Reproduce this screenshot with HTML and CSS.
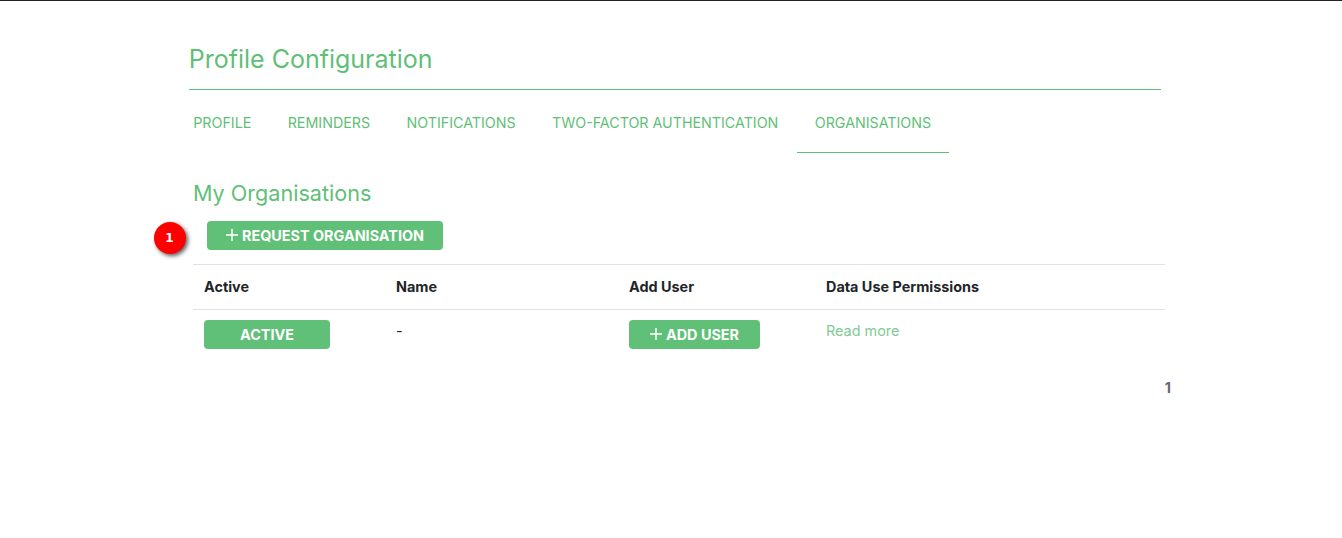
FILE: index.html
```html
<!DOCTYPE html>
<html lang="en">
<head>
<meta charset="utf-8">
<title>Profile Configuration</title>
<link rel="stylesheet" href="styles.css">
</head>
<body>
<main class="page">
  <h1 class="title">Profile Configuration</h1>
  <nav class="tabs">
    <a class="tab">PROFILE</a>
    <a class="tab">REMINDERS</a>
    <a class="tab">NOTIFICATIONS</a>
    <a class="tab">TWO-FACTOR AUTHENTICATION</a>
    <a class="tab tab-active">ORGANISATIONS</a>
  </nav>
  <section class="panel">
    <h2 class="subtitle">My Organisations</h2>
    <div class="actions">
      <span class="marker">1</span>
      <button class="btn btn-request"><svg class="plus" viewBox="0 0 12 12"><path d="M6 0v12M0 6h12"/></svg>REQUEST ORGANISATION</button>
    </div>
    <div class="table">
      <div class="row head"><div>Active</div><div>Name</div><div>Add User</div><div>Data Use Permissions</div></div>
      <div class="row"><div><button class="btn btn-active">ACTIVE</button></div><div>-</div><div><button class="btn btn-add"><svg class="plus" viewBox="0 0 12 12"><path d="M6 0v12M0 6h12"/></svg>ADD USER</button></div><div><a class="link">Read more</a></div></div>
    </div>
    <div class="pager">1</div>
  </section>
</main>
</body>
</html>
```
FILE: styles.css
```css
* { box-sizing: border-box; }
body { margin: 0; background: #fff; color: #212529; font: 14.4px/22px Inter, sans-serif; border-top: 1px solid #212121; }
.page { width: 972px; margin-left: 189px; padding-top: 39px; }
.title { margin: 0; height: 50px; font-size: 25px; font-weight: 380; line-height: 38px; color: #5fbf77; border-bottom: 1px solid #5fbf77; text-indent: -0.3px; }
.tabs { display: flex; height: 63px; margin-left: -14px; }
.tab { padding: 22px 18.2px 0; font-size: 14.28px; font-weight: 400; color: #5fbf77; white-space: nowrap; }
.tab-active { border-bottom: 1px solid #5fbf77; }
.panel { width: 983px; padding-left: 4px; }
.subtitle { margin: 0; padding-top: 24px; height: 68px; font-size: 21.6px; font-weight: 380; line-height: 32px; color: #5fbf77; }
.actions { position: relative; height: 43px; padding-left: 14px; }
.btn { display: flex; align-items: center; justify-content: center; height: 29px; padding: 0; border: 0; border-radius: 4px; background: #60c078; color: #fff; font: 700 14.4px/22px Inter, sans-serif; white-space: nowrap; }
.btn-request { width: 236px; }
.btn-active { width: 126px; }
.btn-add { width: 131px; }
.plus { width: 12px; height: 12px; margin: -2px 4px 0 0; fill: none; stroke: #fff; stroke-width: 1.5; }
.marker { position: absolute; left: -39.5px; top: 0.5px; width: 32px; height: 32px; border-radius: 50%; background: #f00; color: #fff; font: bold 12px/32px "DejaVu Sans", sans-serif; text-align: center; box-shadow: 2px 2px 4px rgba(0,0,0,.65); }
.table { width: 972px; }
.row { display: grid; grid-template-columns: 192px 233px 197px 1fr; height: 56px; padding: 10px 11px 0; border-top: 1px solid #dee2e6; }
.head { height: 45px; padding-top: 11px; font-weight: 700; }
.link { color: #7fcb93; }
.pager { margin-top: 12px; padding-right: 1px; text-align: right; font-weight: 700; color: #6c6873; }
```
